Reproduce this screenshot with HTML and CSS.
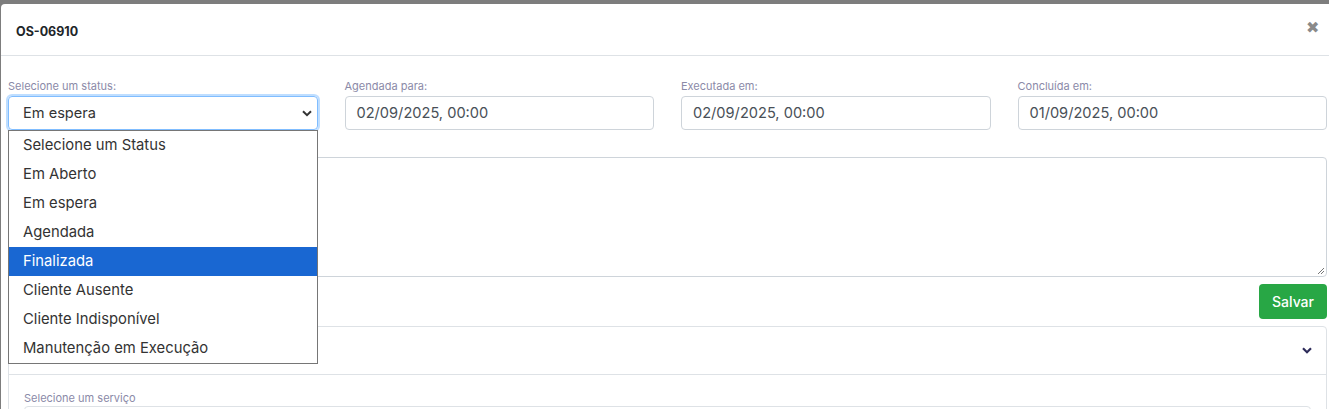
FILE: index.html
```html
<!DOCTYPE html>
<html lang="pt">
<head>
<meta charset="utf-8">
<link rel="stylesheet" href="styles.css">
</head>
<body>
<div class="modal">
  <div class="modal-header">
    <span class="title">OS-06910</span>
    <span class="close">&#x2716;</span>
  </div>
  <div class="modal-body">
    <div class="row">
      <div class="field">
        <label class="lbl">Selecione um status:</label>
        <div class="select-wrap">
          <div class="control select focused">Em espera
            <svg class="chev" width="10" height="7" viewBox="0 0 10 7"><path d="M1 1.2 5 5.2 9 1.2" fill="none" stroke="#333" stroke-width="2"/></svg>
          </div>
          <ul class="dropdown">
            <li>Selecione um Status</li>
            <li>Em Aberto</li>
            <li>Em espera</li>
            <li>Agendada</li>
            <li class="hl">Finalizada</li>
            <li>Cliente Ausente</li>
            <li>Cliente Indisponível</li>
            <li>Manutenção em Execução</li>
          </ul>
        </div>
      </div>
      <div class="field">
        <label class="lbl">Agendada para:</label>
        <div class="control">02/09/2025, 00:00</div>
      </div>
      <div class="field">
        <label class="lbl">Executada em:</label>
        <div class="control">02/09/2025, 00:00</div>
      </div>
      <div class="field">
        <label class="lbl">Concluída em:</label>
        <div class="control">01/09/2025, 00:00</div>
      </div>
    </div>
    <div class="textarea">
      <svg class="grip" width="9" height="9" viewBox="0 0 9 9"><path d="M8 2 2 8M8 5 5 8" stroke="#777" stroke-width="1"/></svg>
    </div>
    <div class="actions"><button class="btn">Salvar</button></div>
    <div class="card">
      <div class="card-header">
        <svg width="10" height="7" viewBox="0 0 10 7"><path d="M1 1.2 5 5.2 9 1.2" fill="none" stroke="#2e2c5a" stroke-width="2.2"/></svg>
      </div>
      <div class="card-body">
        <label class="lbl">Selecione um serviço</label>
        <div class="control small"></div>
      </div>
    </div>
  </div>
</div>
</body>
</html>
```
FILE: styles.css
```css
* { box-sizing: border-box; }
html, body { margin: 0; padding: 0; height: 100%; overflow: hidden; }
body {
  background: #7d7d7d;
  font-family: "Inter", "Open Sans", sans-serif;
  padding: 4px 0 0 1px;
}
.modal {
  background: #fff;
  border-top-left-radius: 4px;
  min-height: 420px;
}
.modal-header {
  height: 52px;
  border-bottom: 1px solid #dee2e6;
  display: flex;
  align-items: center;
  justify-content: space-between;
  padding: 4px 10px 0 15px;
}
.title { font-size: 12.5px; font-weight: 700; color: #212529; }
.close { font-size: 16px; color: #8a8a8a; margin-top: -10px; }
.modal-body { padding: 23px 2px 0 7px; }
.row {
  display: grid;
  grid-template-columns: repeat(4, 1fr);
  column-gap: 27px;
  margin-bottom: 27px;
}
.lbl {
  display: block;
  font-size: 11px;
  color: #8b8aa8;
  height: 17px;
  line-height: 15px;
}
.control {
  height: 34px;
  border: 1px solid #ced4da;
  border-radius: 4px;
  font-size: 14.6px;
  color: #495057;
  padding: 0 11px;
  display: flex;
  align-items: center;
}
.select-wrap { position: relative; }
.select { padding-left: 14px; justify-content: space-between; color: #333; }
.focused {
  border-color: #80bdff;
  box-shadow: 0 0 0 2px rgba(0,123,255,.25);
}
.chev { margin-right: -6px; }
.dropdown {
  position: absolute;
  top: 34px;
  left: 0;
  right: 0;
  margin: 0;
  padding: 0;
  list-style: none;
  background: #fff;
  border: 1px solid #767676;
  z-index: 10;
}
.dropdown li {
  height: 29px;
  line-height: 29px;
  padding-left: 14px;
  font-size: 14.8px;
  color: #333;
}
.dropdown li.hl { background: #1967d2; color: #fff; }
.textarea {
  height: 120px;
  border: 1px solid #ced4da;
  border-radius: 4px;
  position: relative;
}
.grip { position: absolute; right: 1px; bottom: 1px; }
.actions { display: flex; justify-content: flex-end; padding: 7px 0 7px; }
.btn {
  background: #28a745;
  color: #fff;
  border: none;
  border-radius: 4px;
  height: 35px;
  width: 68px;
  font-family: inherit;
  font-size: 14px;
  font-weight: 500;
}
.card { border: 1px solid #dee2e6; border-radius: 4px; }
.card-header {
  height: 48px;
  border-bottom: 1px solid #dee2e6;
  display: flex;
  align-items: center;
  justify-content: flex-end;
  padding-right: 14px;
}
.card-body { padding: 16px 15px 0; }
.card-body .lbl { height: 15px; }
.control.small { border-color: #dee2e6; }
```
